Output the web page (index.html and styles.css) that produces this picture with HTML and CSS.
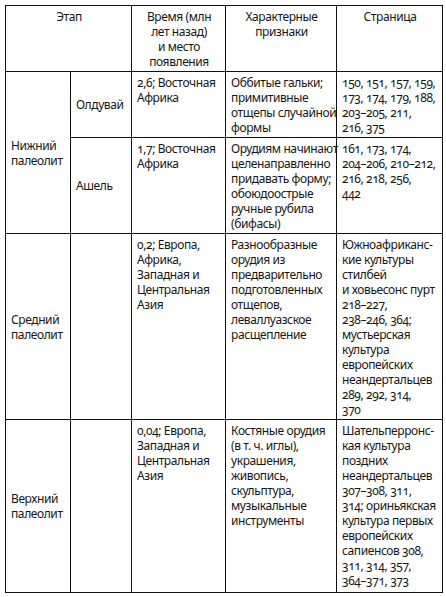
FILE: index.html
```html
<!DOCTYPE html>
<html lang="ru">
<head>
<meta charset="utf-8">
<link rel="stylesheet" href="styles.css">
</head>
<body>
<table class="stages">
  <colgroup>
    <col class="c1"><col class="c2"><col class="c3"><col class="c4"><col class="c5">
  </colgroup>
  <tr class="r-head">
    <th colspan="2">Этап</th>
    <th>Время (млн<br>лет назад)<br>и место<br>появления</th>
    <th>Характерные<br>признаки</th>
    <th>Страница</th>
  </tr>
  <tr class="r1">
    <td rowspan="2" class="mid">Нижний<br>палеолит</td>
    <td class="mid">Олдувай</td>
    <td>2,6; Восточная<br>Африка</td>
    <td>Оббитые гальки;<br>примитивные<br>отщепы случайной<br>формы</td>
    <td class="num">150, 151, 157, 159,<br>173, 174, 179, 188,<br>203–205, 211,<br>216, 375</td>
  </tr>
  <tr class="r2">
    <td class="mid">Ашель</td>
    <td>1,7; Восточная<br>Африка</td>
    <td>Орудиям начинают<br>целенаправленно<br>придавать форму;<br>обоюдоострые<br>ручные рубила<br>(бифасы)</td>
    <td class="num">161, 173, 174,<br>204–206, 210–212,<br>216, 218, 256,<br>442</td>
  </tr>
  <tr class="r3">
    <td class="mid">Средний<br>палеолит</td>
    <td></td>
    <td>0,2; Европа,<br>Африка,<br>Западная и<br>Центральная<br>Азия</td>
    <td>Разнообразные<br>орудия из<br>предварительно<br>подготовленных<br>отщепов,<br>леваллуазское<br>расщепление</td>
    <td class="num">Южноафриканс-<br>кие культуры<br>стилбей<br>и ховьесонс пурт<br>218–227,<br>238–246, 364;<br>мустьерская<br>культура<br>европейских<br>неандертальцев<br>289, 292, 314,<br>370</td>
  </tr>
  <tr class="r4">
    <td class="mid">Верхний<br>палеолит</td>
    <td></td>
    <td>0,04; Европа,<br>Западная и<br>Центральная<br>Азия</td>
    <td>Костяные орудия<br>(в т. ч. иглы),<br>украшения,<br>живопись,<br>скульптура,<br>музыкальные<br>инструменты</td>
    <td class="num">Шательперронс-<br>кая культура<br>поздних<br>неандертальцев<br>307–308, 311,<br>314; ориньякская<br>культура первых<br>европейских<br>сапиенсов 308,<br>311, 314, 357,<br>364–371, 373</td>
  </tr>
</table>
</body>
</html>
```

FILE: styles.css
```css
html, body {
  margin: 0;
  padding: 0;
  background: #ffffff;
}
body {
  padding: 5px 0 0 5px;
  font-family: "Noto Sans", "Open Sans", sans-serif;
  font-size: 12px;
  line-height: 15px;
  letter-spacing: -0.4px;
  color: #161616;
  font-variant-numeric: oldstyle-nums;
}
.stages {
  border-collapse: collapse;
  table-layout: fixed;
  width: 437px;
}
.c1 { width: 65px; }
.c2 { width: 61px; }
.c3 { width: 94px; }
.c4 { width: 111px; }
.c5 { width: 106px; }
.stages th,
.stages td {
  border: 1px solid #111111;
  padding: 3px 0 0 5px;
  vertical-align: top;
  text-align: left;
  font-weight: normal;
  white-space: nowrap;
}
.stages th {
  text-align: center;
  padding-left: 1px;
}
.stages td.mid {
  vertical-align: middle;
  padding-top: 0;
}
.r-head { height: 66px; }
.r1 { height: 66px; }
.r2 { height: 96px; }
.r3 { height: 186px; }
.r4 { height: 173px; }
```
